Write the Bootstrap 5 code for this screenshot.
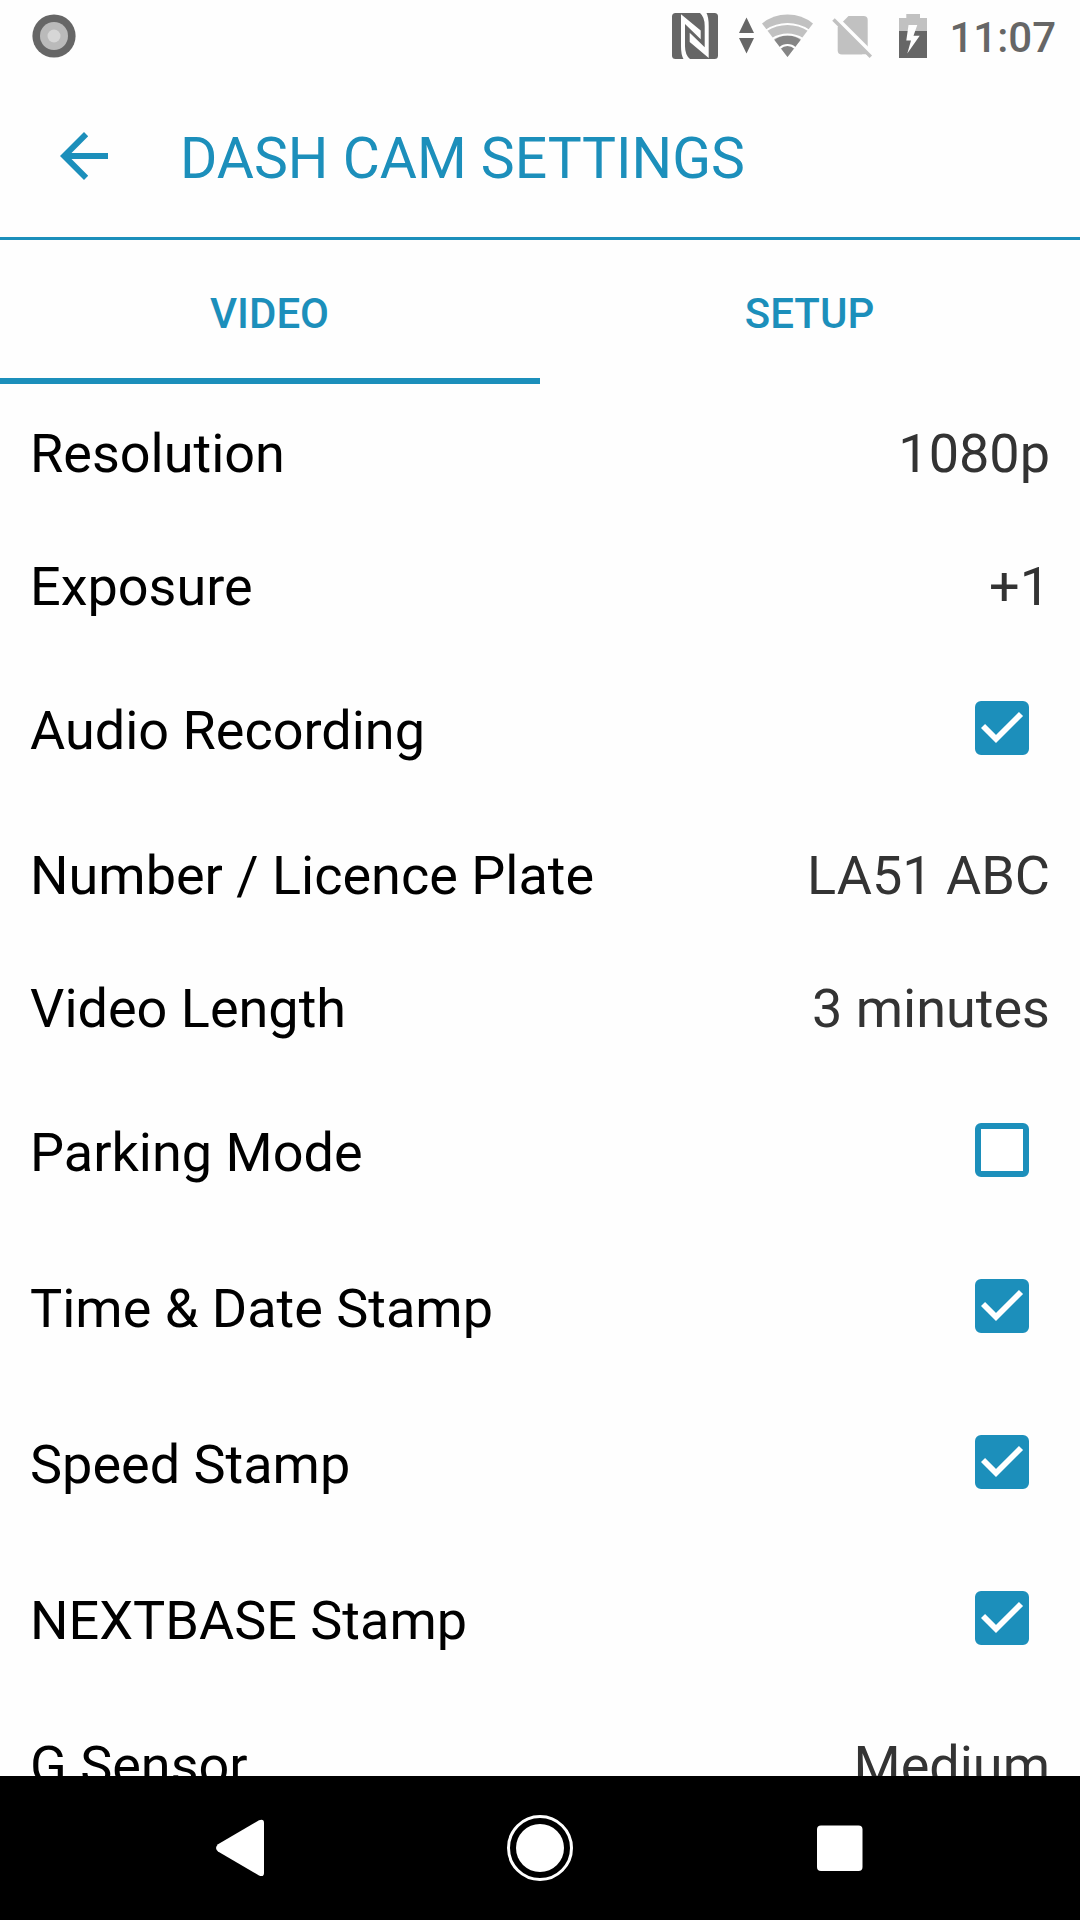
<!DOCTYPE html>
<html lang="en">
<head>
<meta charset="utf-8">
<meta name="viewport" content="width=device-width, initial-scale=1">
<title>Dash Cam Settings</title>
<link href="https://cdn.jsdelivr.net/npm/bootstrap@5.3.0/dist/css/bootstrap.min.css" rel="stylesheet">
<style>
:root { --accent: #1c8fbb; }
body { font-family: Roboto, "Liberation Sans", sans-serif; background: #fefefe; color: #000; }
svg { display: block; }
.status-bar { height: 72px; padding-right: 24px; padding-left: 32px; }
.clock { font-size: 42px; font-weight: 500; line-height: 50px; color: #666; margin-left: 21px; padding-top: 3px; }
.title-bar { height: 168px; border-bottom: 3px solid var(--accent); color: var(--accent); padding: 3px 0 0 60px; }
.title-bar h1 { font-size: 57px; font-weight: 400; line-height: 70px; margin-left: 72px; padding-top: 5px; }
.settings-tabs .nav-link { height: 144px; border-radius: 0; border-bottom: 6px solid transparent; color: var(--accent); font-size: 42px; font-weight: 500; line-height: 50px; padding: 9px 1px 0 0; }
.settings-tabs .nav-link.active { border-bottom-color: var(--accent); }
.setting { height: 133px; padding: 6px 30px 0; font-size: 54px; line-height: 64px; flex-shrink: 0; }
.setting-toggle { height: 156px; padding-right: 51px; }
.setting-value { color: #333; }
.form-check-input.tick { width: 54px; height: 54px; margin: -6px 0 0; border: 6px solid var(--accent); border-radius: 6px; flex-shrink: 0; }
.form-check-input.tick:checked { background: var(--accent) url("data:image/svg+xml,%3Csvg xmlns='http://www.w3.org/2000/svg' viewBox='0 0 54 54'%3E%3Cpath d='M8 25l13 13 25-25' fill='none' stroke='%23fff' stroke-width='5.8'/%3E%3C/svg%3E") center / 54px 54px no-repeat border-box; }
.system-nav { height: 144px; background: #000; }
</style>
<script src="https://cdn.jsdelivr.net/npm/bootstrap@5.3.0/dist/js/bootstrap.bundle.min.js"></script>
</head>
<body>
<div class="vh-100 d-flex flex-column overflow-hidden">
  <div class="status-bar d-flex align-items-center flex-shrink-0">
    <svg class="me-auto" width="44" height="44" viewBox="0 0 44 44"><circle cx="22" cy="22" r="21.6" fill="#666"/><circle cx="22" cy="22" r="14" fill="#bababa"/><circle cx="22" cy="22" r="6.5" fill="#d6d6d6"/></svg>
    <svg width="258" height="72" viewBox="670 0 258 72">
      <!-- NFC -->
      <rect x="672" y="13" width="46" height="46" rx="3.500" fill="#666"/>
      <path d="M681 14.300L700.700 30.500V39.300L685 24V46.300Q685 55 690 59H683.500Q681 55 681 46.300Z" fill="#fefefe"/>
      <path d="M708.700 58L689.700 42V32.700L704.700 47.300V26Q704.700 17 700 13H706.500Q708.700 17 708.700 26Z" fill="#fefefe"/>
      <!-- data arrows and Wi-Fi -->
      <path d="M746.500 17.500L754 33H739ZM739 38H754L746.500 53.500Z" fill="#666"/>
      <path d="M787.500 57L762 23.500Q773 14.500 787.500 14.500T813 23.500Z" fill="#c1c1c1"/>
      <path d="M787.500 57L774.500 40Q780 35.500 787.500 35.500T800.500 40Z" fill="#858585"/>
      <path d="M766 30.500Q776 24 787.500 24T809 30.500M772 39Q779.500 34.500 787.500 34.500T803 39M780 48Q783 45 787.500 45T795 48" fill="none" stroke="#fefefe" stroke-width="2"/>
      <!-- no SIM -->
      <path d="M848.500 16H863.500Q867.700 16 867.700 20V54.500H842Q837.700 54.500 837.700 50.500V27Z" fill="#c1c1c1"/>
      <path d="M835.500 17L875 56.500" stroke="#fefefe" stroke-width="4"/>
      <path d="M833.500 19.500L870.800 56.800" stroke="#c1c1c1" stroke-width="3.500"/>
      <path d="M866 54.500H862L868 60.500V58Z" fill="#fefefe"/>
      <!-- charging battery -->
      <path d="M899 18H906.300V14H920V18H927V31H899Z" fill="#c1c1c1"/>
      <path d="M899 31H927V58H899Z" fill="#666"/>
      <path d="M908.500 25H917.300L913.500 35.800H919.700L907.300 53.500 911 40.500H906.300Z" fill="#fefefe"/>
    </svg>
    <div class="clock">11:07</div>
  </div>
  <header class="title-bar d-flex align-items-center flex-shrink-0">
    <svg width="48" height="48" viewBox="0 0 48 48"><path d="M48 21H11.500L28.200 4.200 24 0 0 24 24 48 28.200 43.800 11.500 27H48Z" fill="#1c8fbb"/></svg>
    <h1 class="mb-0">DASH CAM SETTINGS</h1>
  </header>
  <nav class="settings-tabs nav nav-fill flex-shrink-0">
    <a class="nav-link col-6 active d-flex align-items-center justify-content-center" href="#">VIDEO</a>
    <a class="nav-link col-6 d-flex align-items-center justify-content-center" href="#">SETUP</a>
  </nav>
  <main class="d-flex flex-column flex-grow-1 overflow-hidden">
    <div class="setting d-flex align-items-center justify-content-between"><span>Resolution</span><span class="setting-value">1080p</span></div>
    <div class="setting d-flex align-items-center justify-content-between"><span>Exposure</span><span class="setting-value">+1</span></div>
    <label class="setting setting-toggle d-flex align-items-center justify-content-between"><span>Audio Recording</span><input class="form-check-input tick" type="checkbox" checked></label>
    <div class="setting d-flex align-items-center justify-content-between"><span>Number / Licence Plate</span><span class="setting-value">LA51 ABC</span></div>
    <div class="setting d-flex align-items-center justify-content-between"><span>Video Length</span><span class="setting-value">3 minutes</span></div>
    <label class="setting setting-toggle d-flex align-items-center justify-content-between"><span>Parking Mode</span><input class="form-check-input tick" type="checkbox"></label>
    <label class="setting setting-toggle d-flex align-items-center justify-content-between"><span>Time &amp; Date Stamp</span><input class="form-check-input tick" type="checkbox" checked></label>
    <label class="setting setting-toggle d-flex align-items-center justify-content-between"><span>Speed Stamp</span><input class="form-check-input tick" type="checkbox" checked></label>
    <label class="setting setting-toggle d-flex align-items-center justify-content-between"><span>NEXTBASE Stamp</span><input class="form-check-input tick" type="checkbox" checked></label>
    <div class="setting d-flex align-items-center justify-content-between"><span>G Sensor</span><span class="setting-value">Medium</span></div>
  </main>
  <footer class="system-nav d-flex align-items-center justify-content-center flex-shrink-0">
    <svg width="648" height="72" viewBox="216 1812 648 72" fill="#fff">
      <path d="M218 1844.200L259 1820.300Q264 1818.500 264 1823V1873Q264 1877.500 259 1875.500L218 1851.600Q214 1848 218 1844.200Z"/>
      <circle cx="540" cy="1848" r="31.500" fill="none" stroke="#fff" stroke-width="3"/>
      <circle cx="540" cy="1848" r="24"/>
      <rect x="817" y="1825.500" width="45.500" height="45.500" rx="4"/>
    </svg>
  </footer>
</div>
</body>
</html>
